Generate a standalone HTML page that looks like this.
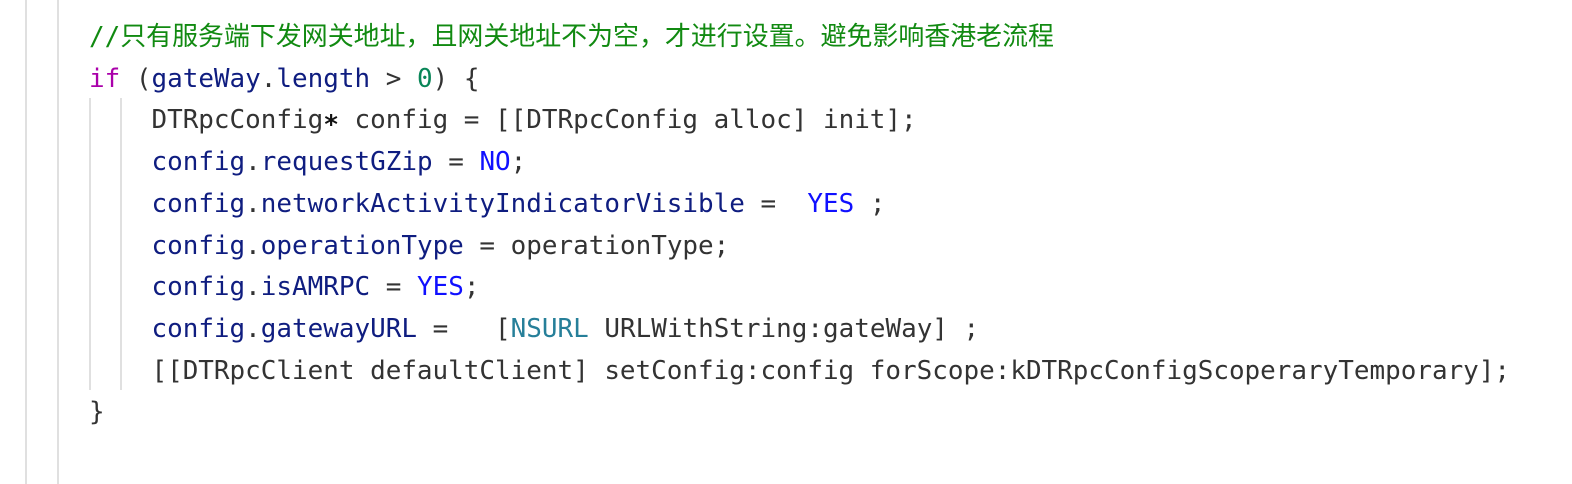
<!DOCTYPE html>
<html><head><meta charset="utf-8"><style>
html,body{margin:0;padding:0;background:#fff;width:1572px;height:484px;overflow:hidden;position:relative}
.v{position:absolute;width:2px;background:#e0e0e0}
pre{position:absolute;left:89px;top:17px;margin:0;font-family:"DejaVu Sans Mono","Liberation Mono","Noto Sans CJK SC",monospace;font-size:25.95px;line-height:41.7px;color:#333;white-space:pre}
.c{color:#118a11;font-family:"DejaVu Sans Mono","Noto Sans CJK SC",monospace}
.k{color:#a0a}.n{color:#0f1d80}.b{color:#1010ff}.t{color:#098658}.s{color:#267f99}
.a{color:#111;font-weight:bold}
</style></head><body>
<div class="v" style="left:25px;top:0;height:484px"></div>
<div class="v" style="left:57px;top:0;height:484px"></div>
<div class="v" style="left:89px;top:98px;height:292px"></div>
<div class="v" style="left:120px;top:98px;height:292px"></div>
<pre><span class="c">//只有服务端下发网关地址，且网关地址不为空，才进行设置。避免影响香港老流程</span>
<span class="k">if</span> (<span class="n">gateWay</span>.<span class="n">length</span> &gt; <span class="t">0</span>) {
    DTRpcConfig<span class="a">∗</span> config = [[DTRpcConfig alloc] init];
    <span class="n">config</span>.<span class="n">requestGZip</span> = <span class="b">NO</span>;
    <span class="n">config</span>.<span class="n">networkActivityIndicatorVisible</span> =  <span class="b">YES</span> ;
    <span class="n">config</span>.<span class="n">operationType</span> = operationType;
    <span class="n">config</span>.<span class="n">isAMRPC</span> = <span class="b">YES</span>;
    <span class="n">config</span>.<span class="n">gatewayURL</span> =   [<span class="s">NSURL</span> URLWithString:gateWay] ;
    [[DTRpcClient defaultClient] setConfig:config forScope:kDTRpcConfigScoperaryTemporary];
}</pre>
</body></html>
